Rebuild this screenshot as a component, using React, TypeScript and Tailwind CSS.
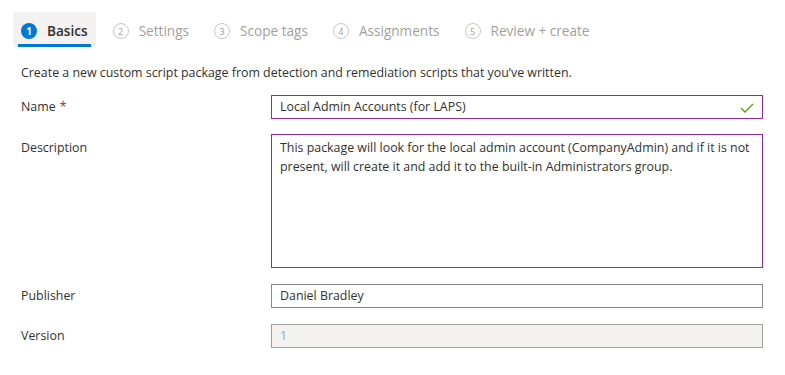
import React from "react";

const steps = ["Basics", "Settings", "Scope tags", "Assignments", "Review + create"];

function Check() {
  return (
    <svg width="14" height="10" viewBox="0 0 14 10" className="shrink-0">
      <path d="M1 5 L5 9 L13 1" fill="none" stroke="#57a300" strokeWidth="1.3" />
    </svg>
  );
}

export default function App() {
  return (
    <div className="w-[785px] h-[375px] bg-white text-[12.4px] text-[#323130] font-['Open_Sans',sans-serif] overflow-hidden">
      {/* Wizard tabs */}
      <div className="flex items-stretch gap-[9px] pl-[13px] pt-[12px]">
        {steps.map((s, i) => {
          const active = i === 0;
          return (
            <div
              key={s}
              className={`relative flex items-center h-[35px] px-[8px] pt-[3px] gap-[10px] ${active ? "bg-[#f3f2f1]" : ""}`}
            >
              {active ? (
                <span className="flex items-center justify-center w-[16px] h-[16px] rounded-full bg-[#0078d4] text-white text-[10px] font-bold leading-none">
                  {i + 1}
                </span>
              ) : (
                <span className="flex items-center justify-center w-[16px] h-[16px] rounded-full border border-[#c8c6c4] text-[#a19f9d] text-[9px] leading-none">
                  {i + 1}
                </span>
              )}
              <span className={`text-[13.6px] ${active ? "font-semibold text-[#323130]" : "text-[#a19f9d]"}`}>{s}</span>
              {active && <span className="absolute left-[5px] right-[5px] bottom-0 h-[3px] bg-[#0078d4]" />}
            </div>
          );
        })}
      </div>

      <div className="pl-[21px] pr-[22px]">
        <p className="mt-[17px] leading-[17px]">
          Create a new custom script package from detection and remediation scripts that you’ve written.
        </p>

        <div className="grid grid-cols-[250px_492px] gap-y-[15px] mt-[14px]">
          <div className="flex items-center h-[24px] pt-[1px]">
            Name <span className="text-[#a4262c] ml-[4px]">*</span>
          </div>
          <div className="flex items-center h-[24px] border border-[#8a2da5] px-[8px] pt-[1px]">
            <span className="flex-1">Local Admin Accounts (for LAPS)</span>
            <Check />
          </div>

          <div className="pt-[4px] leading-[19px]">Description</div>
          <div className="h-[134px] border border-[#8a2da5] px-[8px] pt-[3px] leading-[19px]">
            This package will look for the local admin account (CompanyAdmin) and if it is not present, will create it and add it to the built-in Administrators group.
          </div>

          <div className="flex items-center h-[24px] mt-[1px] pt-[1px]">Publisher</div>
          <div className="flex items-center h-[24px] mt-[1px] border border-[#8a8886] px-[8px] pt-[1px]">Daniel Bradley</div>

          <div className="flex items-center h-[24px] mt-[1px] pt-[1px]">Version</div>
          <div className="flex items-center h-[24px] mt-[1px] border border-[#a19f9d] bg-[#f3f2f1] px-[8px] pt-[1px] text-[#a19f9d]">1</div>
        </div>
      </div>
    </div>
  );
}
